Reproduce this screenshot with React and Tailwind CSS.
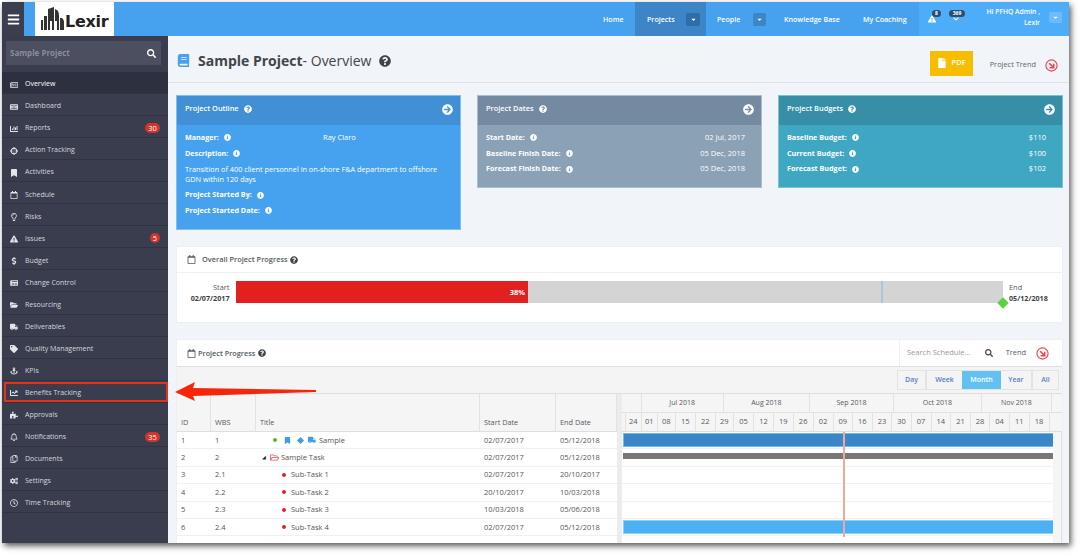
import React from "react";
import {
  FaBars, FaSearch, FaBook, FaQuestionCircle, FaInfoCircle, FaArrowCircleRight, FaRegNewspaper, FaKeyboard,
  FaChartBar, FaCrosshairs, FaBookmark, FaRegCalendar, FaRegLightbulb, FaExclamationTriangle, FaDollarSign,
  FaNewspaper, FaFolderOpen, FaTruck, FaTag, FaAnchor, FaChartLine, FaPuzzlePiece, FaRegBell, FaRegCopy,
  FaCogs, FaRegClock, FaCaretDown, FaFile, FaRegFolderOpen, FaCircle, FaChevronDown,
} from "react-icons/fa";

const menu = [
  ["Overview", FaRegNewspaper], ["Dashboard", FaKeyboard], ["Reports", FaChartBar, "30"], ["Action Tracking", FaCrosshairs],
  ["Activities", FaBookmark], ["Schedule", FaRegCalendar], ["Risks", FaRegLightbulb], ["Issues", FaExclamationTriangle, "5"],
  ["Budget", FaDollarSign], ["Change Control", FaNewspaper], ["Resourcing", FaFolderOpen], ["Deliverables", FaTruck],
  ["Quality Management", FaTag], ["KPIs", FaAnchor], ["Benefits Tracking", FaChartLine], ["Approvals", FaPuzzlePiece],
  ["Notifications", FaRegBell, "35"], ["Documents", FaRegCopy], ["Settings", FaCogs], ["Time Tracking", FaRegClock],
];

const rows = [
  ["1", "1", "02/07/2017", "05/12/2018"],
  ["2", "2", "02/07/2017", "05/12/2018"],
  ["3", "2.1", "02/07/2017", "20/10/2017"],
  ["4", "2.2", "20/10/2017", "10/03/2018"],
  ["5", "2.3", "10/03/2018", "05/06/2018"],
  ["6", "2.4", "02/07/2017", "05/12/2018"],
];

const monthEdges = [622, 641.7, 723.7, 810, 894, 981.7, 1052];
const months = ["", "Jul 2018", "Aug 2018", "Sep 2018", "Oct 2018", "Nov 2018"];
const weekEdges = [622, 626, 641.7, 657.7, 676, 695.7, 715.7, 734, 754, 774, 793.7, 813.7, 833.7, 853, 872.7, 892.3, 911.7, 931.7, 951, 971, 990, 1010, 1029.7, 1049.7];
const weeks = ["", "24", "01", "08", "15", "22", "29", "05", "12", "19", "26", "02", "09", "16", "23", "30", "07", "14", "21", "28", "04", "11", "18"];

function Trend() {
  return (
    <svg width="13" height="13" viewBox="0 0 14 14" fill="none" stroke="#e8434f" className="shrink-0">
      <circle cx="7" cy="7" r="6" strokeWidth="1.2" />
      <path d="M4.5 4.5 L9 9 M5 9.4 H9.4 V5" strokeWidth="1.6" />
    </svg>
  );
}

function Info() {
  return <FaInfoCircle className="text-[7px] ml-[5px] shrink-0" />;
}

function Card({ title, bg, head, children, className }) {
  return (
    <div className={`border border-white/30 text-white ${bg} ${className}`}>
      <div className={`h-[29px] ${head} flex justify-between pl-[8px] pr-[7px]`}>
        <div className="flex items-center gap-[5px] h-[25px] text-[7.4px] font-semibold">
          {title}
          <FaQuestionCircle className="text-[8px]" />
        </div>
        <FaArrowCircleRight className="text-[11px] mt-[8px]" />
      </div>
      <div className="pl-[8px] pr-[16px] pt-[5px] text-[7.5px] leading-[15.7px]">{children}</div>
    </div>
  );
}

function Line({ label, value }) {
  return (
    <div className="flex justify-between h-[15.7px] items-center">
      <span className="flex items-center font-bold text-[7.2px]">{label}:<Info /></span>
      {value && <span>{value}</span>}
    </div>
  );
}

export default function App() {
  return (
    <div className="w-[1081px] h-[556px] bg-white overflow-hidden relative pl-[2px] pt-[2px] font-['Open_Sans',sans-serif] text-[#555a60]">
      <div className="w-[1067px] h-[541px] flex flex-col shadow-[2px_3px_6px_rgba(0,0,0,0.65)]">
        {/* Top bar */}
        <header className="h-[34px] flex bg-[#46a2ee] text-white shrink-0">
          <div className="w-[22px] bg-[#3a3e4e] flex items-center justify-center text-[13px]"><FaBars /></div>
          <div className="w-[11px]" />
          <div className="w-[79px] bg-white flex items-end pl-[6px] pb-[6px] text-[#222]">
            <svg width="23" height="23" viewBox="0 0 23 23" fill="#333" className="shrink-0">
              <path d="M0 13h2v10H0zM3 9h3v14H3zM7 2l6-2v23h-2v-9H9v9H7zM14 2c3 1 4 3 4 7v14h-2v-9h-2zM19 11h2c1 1 2 2 2 4v8h-4z" />
            </svg>
            <span className="font-['DejaVu_Sans',sans-serif] font-bold text-[16px] leading-[17px] ml-[1px] tracking-[-0.3px]">Lexir</span>
          </div>
          <div className="flex-1" />
          <nav className="w-[329px] flex text-[7.1px] font-semibold">
            <div className="w-[45px] flex items-center pl-[13px]">Home</div>
            <div className="w-[71px] bg-[#3d85c6] flex items-center pl-[12px]">
              Projects
              <span className="ml-auto mr-[6px] w-[14px] h-[13px] rounded-[2px] bg-[#2f6da8] flex items-center justify-center text-[7px]"><FaCaretDown /></span>
            </div>
            <div className="w-[66px] flex items-center pl-[11px]">
              People
              <span className="ml-auto mr-[6px] w-[13px] h-[13px] rounded-[2px] bg-[#3d85c6] flex items-center justify-center text-[7px]"><FaCaretDown /></span>
            </div>
            <div className="w-[79px] flex items-center pl-[12px]">Knowledge Base</div>
            <div className="flex-1 flex items-center pl-[12px]">My Coaching</div>
          </nav>
          <div className="w-[150px] bg-[#4dadf8] flex items-start">
            <div className="relative ml-[9px] mt-[13px] text-[8px]">
              <FaExclamationTriangle />
              <span className="absolute -top-[5px] left-[4px] w-[9px] h-[7px] rounded-full bg-[#2c4d6e] text-[5px] leading-[7px] text-center font-bold">8</span>
            </div>
            <div className="relative ml-[17px] mt-[14px] text-[6px]">
              <FaChevronDown />
              <span className="absolute -top-[6px] -left-[4px] w-[16px] h-[7px] rounded-full bg-[#2c4d6e] text-[5px] leading-[7px] text-center font-bold">369</span>
            </div>
            <div className="ml-auto mt-[4px] text-right text-[6.75px] font-semibold leading-[11px]">Hi PFHQ Admin ,<br />Lexir</div>
            <span className="ml-[9px] mr-[7px] mt-[10px] w-[13px] h-[11px] rounded-[2px] bg-[#6bbcf9] flex items-center justify-center text-[7px]"><FaCaretDown /></span>
          </div>
        </header>

        <div className="flex-1 flex min-h-0">
          {/* Sidebar */}
          <aside className="w-[166px] bg-[#393d4d] text-[#d5d7dd] shrink-0">
            <div className="h-[36px] pt-[5px] pl-[4px] pr-[7px]">
              <div className="h-[24px] bg-[#4b4f5f] flex items-center justify-between pl-[4px] pr-[5px]">
                <span className="text-[8px] font-bold text-[#8a8d99]">Sample Project</span>
                <FaSearch className="text-[9px] text-white" />
              </div>
            </div>
            {menu.map(([label, Icon, badge], i) => (
              <div key={label} className={`h-[22.05px] relative flex items-center pt-[4px] border-b border-[#303341] text-[7px] ${i === 0 ? "bg-[#2d303e] text-white" : ""}`}>
                <span className="w-[23px] flex justify-center pl-[1px] text-[8px] text-[#e4e5ea] shrink-0"><Icon /></span>
                <span>{label}</span>
                {badge && (
                  <span className={`absolute right-[8px] top-[7px] h-[10px] rounded-full bg-[#d0342a] text-white text-[7.5px] leading-[10px] text-center ${badge.length > 1 ? "w-[15px]" : "w-[10px]"}`}>{badge}</span>
                )}
                {label === "Benefits Tracking" && <span className="absolute top-[1px] bottom-0 left-[2px] right-0 border-2 border-[#e4331a]" />}
              </div>
            ))}
          </aside>

          {/* Main */}
          <main className="flex-1 bg-[#f1f4f8] min-w-0 overflow-hidden">
            <div className="h-[47px] border-b border-[#dfe2e6] flex items-center pt-[3px] pl-[9px] pr-[11px]">
              <FaBook className="text-[13px] text-[#46a2ee]" />
              <h1 className="ml-[8px] text-[14px] text-[#41454b]"><b>Sample Project</b>- Overview</h1>
              <FaQuestionCircle className="ml-[8px] text-[12px] text-[#41454b]" />
              <div className="ml-auto mt-[5px] w-[43px] h-[25px] bg-[#f7be00] text-white flex items-center justify-center gap-[5px] text-[7.5px] font-semibold">
                <FaFile className="text-[10px]" />PDF
              </div>
              <span className="ml-[17px] mt-[8px] text-[7.4px] text-[#666]">Project Trend</span>
              <span className="ml-[9px] mt-[9px]"><Trend /></span>
            </div>

            <div className="pl-[8px] pr-[6px] pt-[12px]">
              <div className="grid grid-cols-3 gap-[16px] items-start h-[135px]">
                <Card title="Project Outline" bg="bg-[#46a2ee]" head="bg-[#418fd5]" className="h-[135px]">
                  <div className="flex h-[15.7px] items-center">
                    <span className="w-[138px] flex items-center font-bold text-[7.2px]">Manager:<Info /></span>
                    <span>Ray Claro</span>
                  </div>
                  <Line label="Description" />
                  <div className="leading-[10px] py-[3px] text-[7.3px] -mr-[8px]">Transition of 400 client personnel in on-shore F&amp;A department to offshore GDN within 120 days</div>
                  <Line label="Project Started By" />
                  <Line label="Project Started Date" />
                </Card>
                <Card title="Project Dates" bg="bg-[#8ba1b5]" head="bg-[#738aa1]" className="h-[93px]">
                  <Line label="Start Date" value="02 Jul, 2017" />
                  <Line label="Baseline Finish Date" value="05 Dec, 2018" />
                  <Line label="Forecast Finish Date" value="05 Dec, 2018" />
                </Card>
                <Card title="Project Budgets" bg="bg-[#3fa7c1]" head="bg-[#368fa6]" className="h-[93px]">
                  <Line label="Baseline Budget" value="$110" />
                  <Line label="Current Budget" value="$100" />
                  <Line label="Forecast Budget" value="$102" />
                </Card>
              </div>

              {/* Overall progress */}
              <section className="mt-[16px] h-[77px] bg-white border border-[#edf0f3]">
                <div className="h-[26px] border-b border-[#eef0f2] flex items-center pl-[10px] text-[7.4px] font-semibold text-[#555a60]">
                  <FaRegCalendar className="text-[9px] mr-[6px]" />
                  Overall Project Progress
                  <FaQuestionCircle className="text-[8px] ml-[2px] text-[#41454b]" />
                </div>
                <div className="flex pt-[8px]">
                  <div className="w-[52.5px] text-right text-[7.4px] leading-[10.5px] pt-[1px]">
                    Start<br /><b className="text-[#3c3f44] text-[7.2px]">02/07/2017</b>
                  </div>
                  <div className="relative ml-[6px] w-[767.5px] h-[22px] bg-[#d4d4d4] flex justify-start">
                    <div className="w-[292.5px] bg-[#e32020] text-white text-[7.5px] font-bold text-right pr-[3px] leading-[22px]">38%</div>
                    <span className="absolute left-[645px] inset-y-0 w-[2px] bg-[#aec6dc]" />
                    <span className="absolute -right-[4px] -bottom-[4px] w-[8px] h-[8px] rotate-45 bg-[#5cd147]" />
                  </div>
                  <div className="ml-[6px] text-[7.4px] leading-[10.5px] pt-[1px]">
                    End<br /><b className="text-[#3c3f44] text-[7.2px]">05/12/2018</b>
                  </div>
                </div>
              </section>

              {/* Project progress */}
              <section className="mt-[16px] h-[211px] bg-white border border-[#edf0f3] flex flex-col">
                <div className="h-[26px] flex items-center pl-[10px] text-[7.3px] font-semibold shrink-0">
                  <FaRegCalendar className="text-[9px] mr-[2px]" />
                  Project Progress
                  <FaQuestionCircle className="text-[8px] ml-[3px] text-[#41454b]" />
                  <div className="ml-auto w-[163px] h-full border-l border-[#eef0f2] flex items-center pl-[7px] pr-[13px] font-normal">
                    <span className="text-[#9a9a9a] text-[7.5px]">Search Schedule...</span>
                    <FaSearch className="ml-auto text-[8px] text-[#444]" />
                    <span className="ml-[13px] mr-[10px] text-[7.4px]">Trend</span>
                    <Trend />
                  </div>
                </div>
                <div className="h-[28px] bg-[#f4f4f4] border-y border-[#dedede] shrink-0 flex items-center justify-end pr-[3px]">
                  <div className="flex h-[20px] border border-[#e3e3e3] text-[7px] text-[#5b7fc0] font-semibold">
                    <span className="w-[29px] flex items-center justify-center border-r-2 border-[#e3e3e3]">Day</span>
                    <span className="w-[35px] flex items-center justify-center">Week</span>
                    <span className="w-[39px] flex items-center justify-center bg-[#62c1f3] text-white">Month</span>
                    <span className="w-[32px] flex items-center justify-center border-r-2 border-[#e3e3e3]">Year</span>
                    <span className="w-[25px] flex items-center justify-center">All</span>
                  </div>
                </div>
                <div className="flex-1 flex min-h-0 text-[7.3px]">
                  {/* left table */}
                  <div className="w-[440px] shrink-0">
                    <div className="h-[38px] bg-[#f5f5f5] border-b border-[#dedede] flex items-end">
                      {[["ID", "w-[34px]"], ["WBS", "w-[45px]"], ["Title", "w-[224px]"], ["Start Date", "w-[76px]"], ["End Date", "w-[61px]"]].map(([h, w]) => (
                        <div key={h} className={`${w} h-full border-r border-[#e2e2e2] flex items-end pl-[4px] pb-[3px] shrink-0`}>{h}</div>
                      ))}
                    </div>
                    {rows.map((r, i) => (
                      <div key={r[0]} className="h-[17.4px] flex items-center border-b border-[#f0f0f0] text-[#555] text-[7.5px]">
                        <span className="w-[34px] pl-[4px]">{r[0]}</span>
                        <span className="w-[45px] pl-[4px]">{r[1]}</span>
                        <span className="w-[224px] flex items-center">
                          {i === 0 && (
                            <>
                              <FaCircle className="ml-[17px] text-[4px] text-[#5fb01e]" />
                              <FaBookmark className="ml-[7px] text-[7px] text-[#3f9de8]" />
                              <span className="ml-[7px] w-[5px] h-[5px] rotate-45 bg-[#3f9de8]" />
                              <FaTruck className="ml-[5px] text-[8px] text-[#3f9de8]" />
                              <span className="ml-[3px]">Sample</span>
                            </>
                          )}
                          {i === 1 && (
                            <>
                              <span className="ml-[6px] text-[5px] text-[#222]">◢</span>
                              <FaRegFolderOpen className="ml-[4px] text-[9px] text-[#e8505b]" />
                              <span className="ml-[2px]">Sample Task</span>
                            </>
                          )}
                          {i > 1 && (
                            <>
                              <FaCircle className="ml-[26px] text-[4px] text-[#e5172b]" />
                              <span className="ml-[5px]">Sub-Task {i - 1}</span>
                            </>
                          )}
                        </span>
                        <span className="w-[76px] pl-[4px]">{r[2]}</span>
                        <span className="w-[61px] pl-[4px]">{r[3]}</span>
                      </div>
                    ))}
                  </div>
                  {/* splitter */}
                  <div className="w-[5px] bg-[#ececec] shrink-0" />
                  {/* chart */}
                  <div className="flex-1 min-w-0 relative">
                    <div className="h-[38px] bg-[#f5f5f5] border-b border-[#dedede]">
                      <div className="h-[19px] flex border-b border-[#e2e2e2] text-[7px]">
                        {months.map((m, i) => (
                          <div key={i} className="border-r border-[#e2e2e2] flex items-center justify-center shrink-0" style={{ width: monthEdges[i + 1] - monthEdges[i] }}>{m}</div>
                        ))}
                      </div>
                      <div className="h-[18px] flex">
                        {weeks.map((w, i) => (
                          <div key={i} className="border-r border-[#e2e2e2] flex items-center justify-center shrink-0 text-[7.5px]" style={{ width: weekEdges[i + 1] - weekEdges[i] }}>{w}</div>
                        ))}
                      </div>
                    </div>
                    <div className="relative">
                      <div className="h-[17.4px] border-b border-[#f0f0f0] flex items-center pl-[1px] pr-[8px]"><div className="w-full h-[14px] bg-[#3a87c8] border border-[#72b8ee]" /></div>
                      <div className="h-[17.4px] border-b border-[#f0f0f0] pl-[1px] pr-[8px] pt-[4px]"><div className="w-full h-[6px] bg-[#777]" /></div>
                      <div className="h-[17.4px] border-b border-[#f0f0f0] mr-[8px]" />
                      <div className="h-[17.4px] border-b border-[#f0f0f0] mr-[8px]" />
                      <div className="h-[17.4px] border-b border-[#f0f0f0] mr-[8px]" />
                      <div className="h-[17.4px] border-b border-[#f0f0f0] flex items-center pl-[1px] pr-[8px]"><div className="w-full h-[14px] bg-[#4bb1f2] border border-[#8fd0f8]" /></div>
                      <span className="absolute left-[221px] top-0 h-[105px] w-[2px] bg-[#f2a79b]" />
                    </div>
                    <div className="absolute right-0 top-[38px] bottom-0 w-[9px] bg-[#f5f5f5] border-r border-[#e2e2e2]" />
                  </div>
                </div>
              </section>
            </div>
          </main>
        </div>
      </div>

      {/* Callout arrow */}
      <svg width="145" height="24" viewBox="0 0 145 24" className="absolute left-[174px] top-[380px]">
        <polygon points="1,12 21,2 19,8 142,10 142,12 19,16 21,21" fill="#f5260a" />
      </svg>
    </div>
  );
}
